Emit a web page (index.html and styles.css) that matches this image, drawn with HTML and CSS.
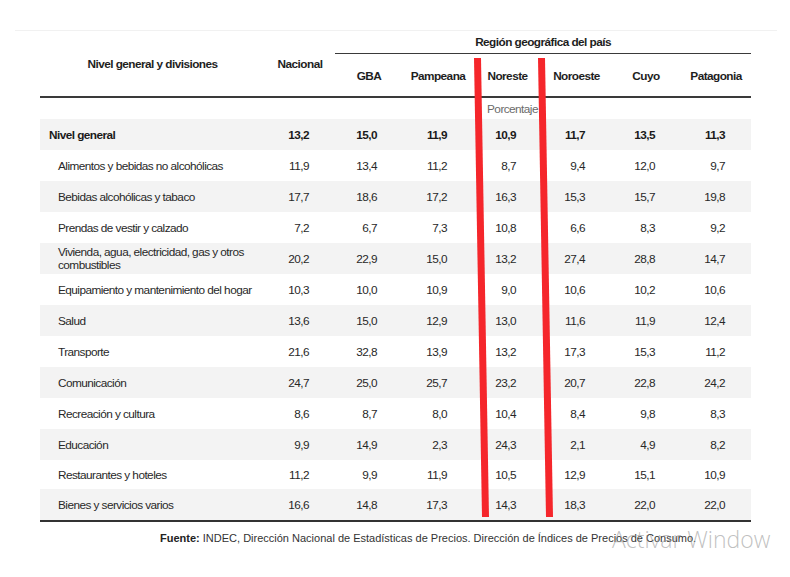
FILE: index.html
```html
<!DOCTYPE html>
<html lang="es">
<head>
<meta charset="utf-8">
<title>Nivel general y divisiones</title>
<link rel="stylesheet" href="styles.css">
</head>
<body>
<div class="page">
  <div class="topline"></div>
  <table class="tbl">
    <colgroup>
      <col class="c-label"><col class="c-nac"><col class="c-gba"><col class="c-pam"><col class="c-nore"><col class="c-noro"><col class="c-cuyo"><col class="c-pat">
    </colgroup>
    <thead>
      <tr class="h1">
        <th rowspan="2" class="th-label">Nivel general y divisiones</th>
        <th rowspan="2" class="th-nac">Nacional</th>
        <th colspan="6" class="th-region">Región geográfica del país</th>
      </tr>
      <tr class="h2">
        <th>GBA</th><th>Pampeana</th><th>Noreste</th><th>Noroeste</th><th>Cuyo</th><th>Patagonia</th>
      </tr>
    </thead>
    <tbody>
      <tr class="unit"><td></td><td></td><td></td><td></td><td class="pct">Porcentaje</td><td></td><td></td><td></td></tr>
      <tr class="shade total"><td class="lbl">Nivel general</td><td>13,2</td><td>15,0</td><td>11,9</td><td>10,9</td><td>11,7</td><td>13,5</td><td>11,3</td></tr>
      <tr><td class="lbl sub">Alimentos y bebidas no alcohólicas</td><td>11,9</td><td>13,4</td><td>11,2</td><td>8,7</td><td>9,4</td><td>12,0</td><td>9,7</td></tr>
      <tr class="shade"><td class="lbl sub">Bebidas alcohólicas y tabaco</td><td>17,7</td><td>18,6</td><td>17,2</td><td>16,3</td><td>15,3</td><td>15,7</td><td>19,8</td></tr>
      <tr><td class="lbl sub">Prendas de vestir y calzado</td><td>7,2</td><td>6,7</td><td>7,3</td><td>10,8</td><td>6,6</td><td>8,3</td><td>9,2</td></tr>
      <tr class="shade"><td class="lbl sub two">Vivienda, agua, electricidad, gas y otros<br>combustibles</td><td>20,2</td><td>22,9</td><td>15,0</td><td>13,2</td><td>27,4</td><td>28,8</td><td>14,7</td></tr>
      <tr><td class="lbl sub">Equipamiento y mantenimiento del hogar</td><td>10,3</td><td>10,0</td><td>10,9</td><td>9,0</td><td>10,6</td><td>10,2</td><td>10,6</td></tr>
      <tr class="shade"><td class="lbl sub">Salud</td><td>13,6</td><td>15,0</td><td>12,9</td><td>13,0</td><td>11,6</td><td>11,9</td><td>12,4</td></tr>
      <tr><td class="lbl sub">Transporte</td><td>21,6</td><td>32,8</td><td>13,9</td><td>13,2</td><td>17,3</td><td>15,3</td><td>11,2</td></tr>
      <tr class="shade"><td class="lbl sub">Comunicación</td><td>24,7</td><td>25,0</td><td>25,7</td><td>23,2</td><td>20,7</td><td>22,8</td><td>24,2</td></tr>
      <tr><td class="lbl sub">Recreación y cultura</td><td>8,6</td><td>8,7</td><td>8,0</td><td>10,4</td><td>8,4</td><td>9,8</td><td>8,3</td></tr>
      <tr class="shade"><td class="lbl sub">Educación</td><td>9,9</td><td>14,9</td><td>2,3</td><td>24,3</td><td>2,1</td><td>4,9</td><td>8,2</td></tr>
      <tr class="short"><td class="lbl sub">Restaurantes y hoteles</td><td>11,2</td><td>9,9</td><td>11,9</td><td>10,5</td><td>12,9</td><td>15,1</td><td>10,9</td></tr>
      <tr class="shade last"><td class="lbl sub">Bienes y servicios varios</td><td>16,6</td><td>14,8</td><td>17,3</td><td>14,3</td><td>18,3</td><td>22,0</td><td>22,0</td></tr>
    </tbody>
  </table>
  <p class="source"><b>Fuente:</b> INDEC, Dirección Nacional de Estadísticas de Precios. Dirección de Índices de Precios de Consumo.</p>

  <svg class="marks" width="790" height="577" viewBox="0 0 790 577" aria-hidden="true">
    <polygon points="474,58 481,58 489,517 482,517" fill="#f5262b"/>
    <polygon points="538,58 545,58 553,517 546,517" fill="#f5262b"/>
  </svg>
  <div class="watermark">Activar Window</div>
</div>
</body>
</html>
```

FILE: styles.css
```css
html, body {
  margin: 0;
  padding: 0;
  background: #ffffff;
}

.page {
  position: relative;
  width: 790px;
  height: 577px;
  overflow: hidden;
  padding-top: 30px;
  box-sizing: border-box;
  font-family: "Liberation Sans", Arial, sans-serif;
  color: #282828;
}

.topline {
  margin-left: 15px;
  width: 762px;
  height: 1px;
  background: #f1f1f1;
}

.tbl {
  margin-left: 40px;
  width: 711px;
  border-collapse: collapse;
  table-layout: fixed;
  font-size: 11.8px;
  letter-spacing: -0.55px;
}

.c-label { width: 225px; }
.c-nac { width: 70px; }
.c-gba { width: 68px; }
.c-pam { width: 70px; }
.c-nore { width: 69px; }
.c-noro { width: 69px; }
.c-cuyo { width: 70px; }
.c-pat { width: 70px; }

.tbl th {
  font-weight: bold;
  color: #1e1e1e;
  text-align: center;
  vertical-align: middle;
  padding: 0;
}

.h1 { height: 22px; }
.h2 { height: 44px; }

.h2 th,
.th-label,
.th-nac {
  border-bottom: 2px solid #3a3a3a;
}

.th-label,
.th-nac {
  padding-bottom: 2px;
}

.th-region {
  border-bottom: 1.5px solid #3a3a3a;
}

.h2 th {
  padding-top: 2px;
}

.tbl td {
  padding: 0 26px 0 0;
  text-align: right;
  vertical-align: middle;
  height: 31px;
  white-space: nowrap;
}

.unit td {
  height: 21px;
}

.tbl td.pct {
  text-align: center;
  padding: 0 0 0 10px;
  color: #6a6a6a;
}

.tbl td.lbl {
  text-align: left;
  padding: 0 0 0 9px;
}

.tbl td.sub {
  padding-left: 18px;
}

.tbl td.two {
  white-space: normal;
  line-height: 13px;
}

.short td {
  height: 29px;
}

.shade td {
  background: #f3f3f3;
}

.total td {
  font-weight: bold;
  color: #1a1a1a;
}

.last td {
  border-bottom: 2px solid #333333;
}

.source {
  margin: 10px 0 0 160px;
  font-family: "Liberation Sans", Arial, sans-serif;
  font-size: 11px;
  color: #333333;
}

.source b {
  color: #222222;
}

.marks {
  position: absolute;
  left: 0;
  top: 0;
  pointer-events: none;
}

.watermark {
  position: absolute;
  left: 612px;
  top: 523px;
  font-family: "Open Sans", "Noto Sans", sans-serif;
  font-weight: 300;
  font-size: 23px;
  color: rgba(150, 150, 150, 0.6);
  white-space: nowrap;
}
```
